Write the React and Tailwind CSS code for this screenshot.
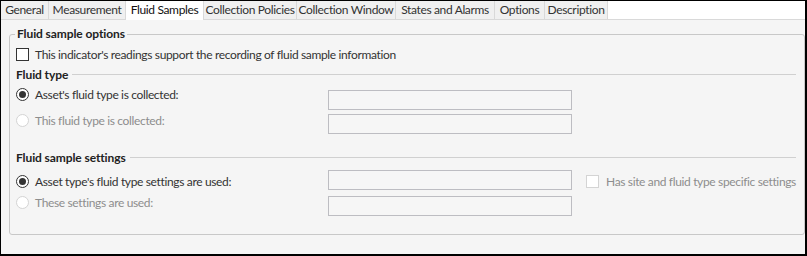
import React from 'react';

const tabs = [
    {label: 'General', w: 48},
    {label: 'Measurement', w: 77},
    {label: 'Fluid Samples', w: 78, active: true},
    {label: 'Collection Policies', w: 93},
    {label: 'Collection Window', w: 99},
    {label: 'States and Alarms', w: 99},
    {label: 'Options', w: 50},
    {label: 'Description', w: 63},
];

const Radio = ({checked, disabled}) => (
    <span className={`w-[13px] h-[13px] rounded-full border flex items-center justify-center shrink-0 bg-white
        ${disabled ? 'border-[#d4d4d4]' : 'border-[#333333]'}`}>
        {checked && <span className="w-[7px] h-[7px] rounded-full bg-[#333333]" />}
    </span>
);

const Checkbox = ({disabled}) => (
    <span className={`w-[13px] h-[13px] border shrink-0 bg-white ${disabled ? 'border-[#d4d4d4]' : 'border-[#333333]'}`} />
);

const Field = ({className = ''}) => (
    <div className={`w-[244px] h-[20px] border border-[#bdbdc2] bg-[#f6f6f6] shrink-0 ${className}`} />
);

const Heading = ({children, className = ''}) => (
    <div className={`flex items-center gap-[4px] h-[13px] pr-[8px] ${className}`}>
        <span className="font-bold text-[#222222] tracking-[-0.1px]">{children}</span>
        <div className="flex-1 h-px bg-[#d0d0d0]" />
    </div>
);

const OptionRow = ({label, checked, disabled, className = '', labelTop = '', fieldTop = '', children}) => (
    <div className={`flex items-start ${className}`}>
        <div className={`w-[312px] h-[13px] shrink-0 flex items-center gap-[6px] ${labelTop}`}>
            <Radio checked={checked} disabled={disabled} />
            <span className={disabled ? 'text-[#8d8d8d]' : 'text-[#333333]'}>{label}</span>
        </div>
        <Field className={fieldTop} />
        {children}
    </div>
);

export default function App() {
    return (
        <div className="w-[807px] h-[256px] border-l border-t border-r-2 border-b-2 border-black bg-[#f5f5f5] text-[12px] leading-none tracking-[-0.35px] whitespace-nowrap flex flex-col"
             style={{fontFamily: 'Lato, "Open Sans", sans-serif'}}>
            <div className="flex h-[19px] bg-white border-b border-[#d9d9d9] shrink-0">
                {tabs.map(t => (
                    <div key={t.label}
                         className={`flex items-center justify-center border-r border-[#d9d9d9] ${t.active ? 'bg-white h-[19px] mb-[-1px] pb-[2px] text-[#111111] relative' : 'bg-[#f0f0f0] h-[18px] text-[#333333]'}`}
                         style={{width: t.w}}>
                        {t.label}
                    </div>
                ))}
            </div>
            <div className="relative mx-[8px] mt-[14px] h-[201px] w-[796px] border border-[#c8c8c8] rounded-[3px] pl-[6px] pt-[13px]">
                <span className="absolute left-[5px] top-[-7px] px-[2px] bg-[#f5f5f5] font-bold text-[#222222] tracking-[-0.1px]">Fluid sample options</span>
                <div className="flex items-center gap-[6px] h-[13px]">
                    <Checkbox />
                    <span className="text-[#333333]">This indicator's readings support the recording of fluid sample information</span>
                </div>
                <Heading className="mt-[7px]">Fluid type</Heading>
                <OptionRow className="mt-[7px]" fieldTop="mt-[2px]" label="Asset's fluid type is collected:" checked />
                <OptionRow className="mt-[4px]" label="This fluid type is collected:" disabled />
                <Heading className="mt-[17px]">Fluid sample settings</Heading>
                <OptionRow className="mt-[6px]" labelTop="mt-[5px]" label="Asset type's fluid type settings are used:" checked>
                    <div className="flex items-center gap-[7px] ml-[14px] mt-[5px] h-[13px]">
                        <Checkbox disabled />
                        <span className="text-[#8d8d8d]">Has site and fluid type specific settings</span>
                    </div>
                </OptionRow>
                <OptionRow className="mt-[6px]" label="These settings are used:" disabled />
            </div>
        </div>
    );
}
